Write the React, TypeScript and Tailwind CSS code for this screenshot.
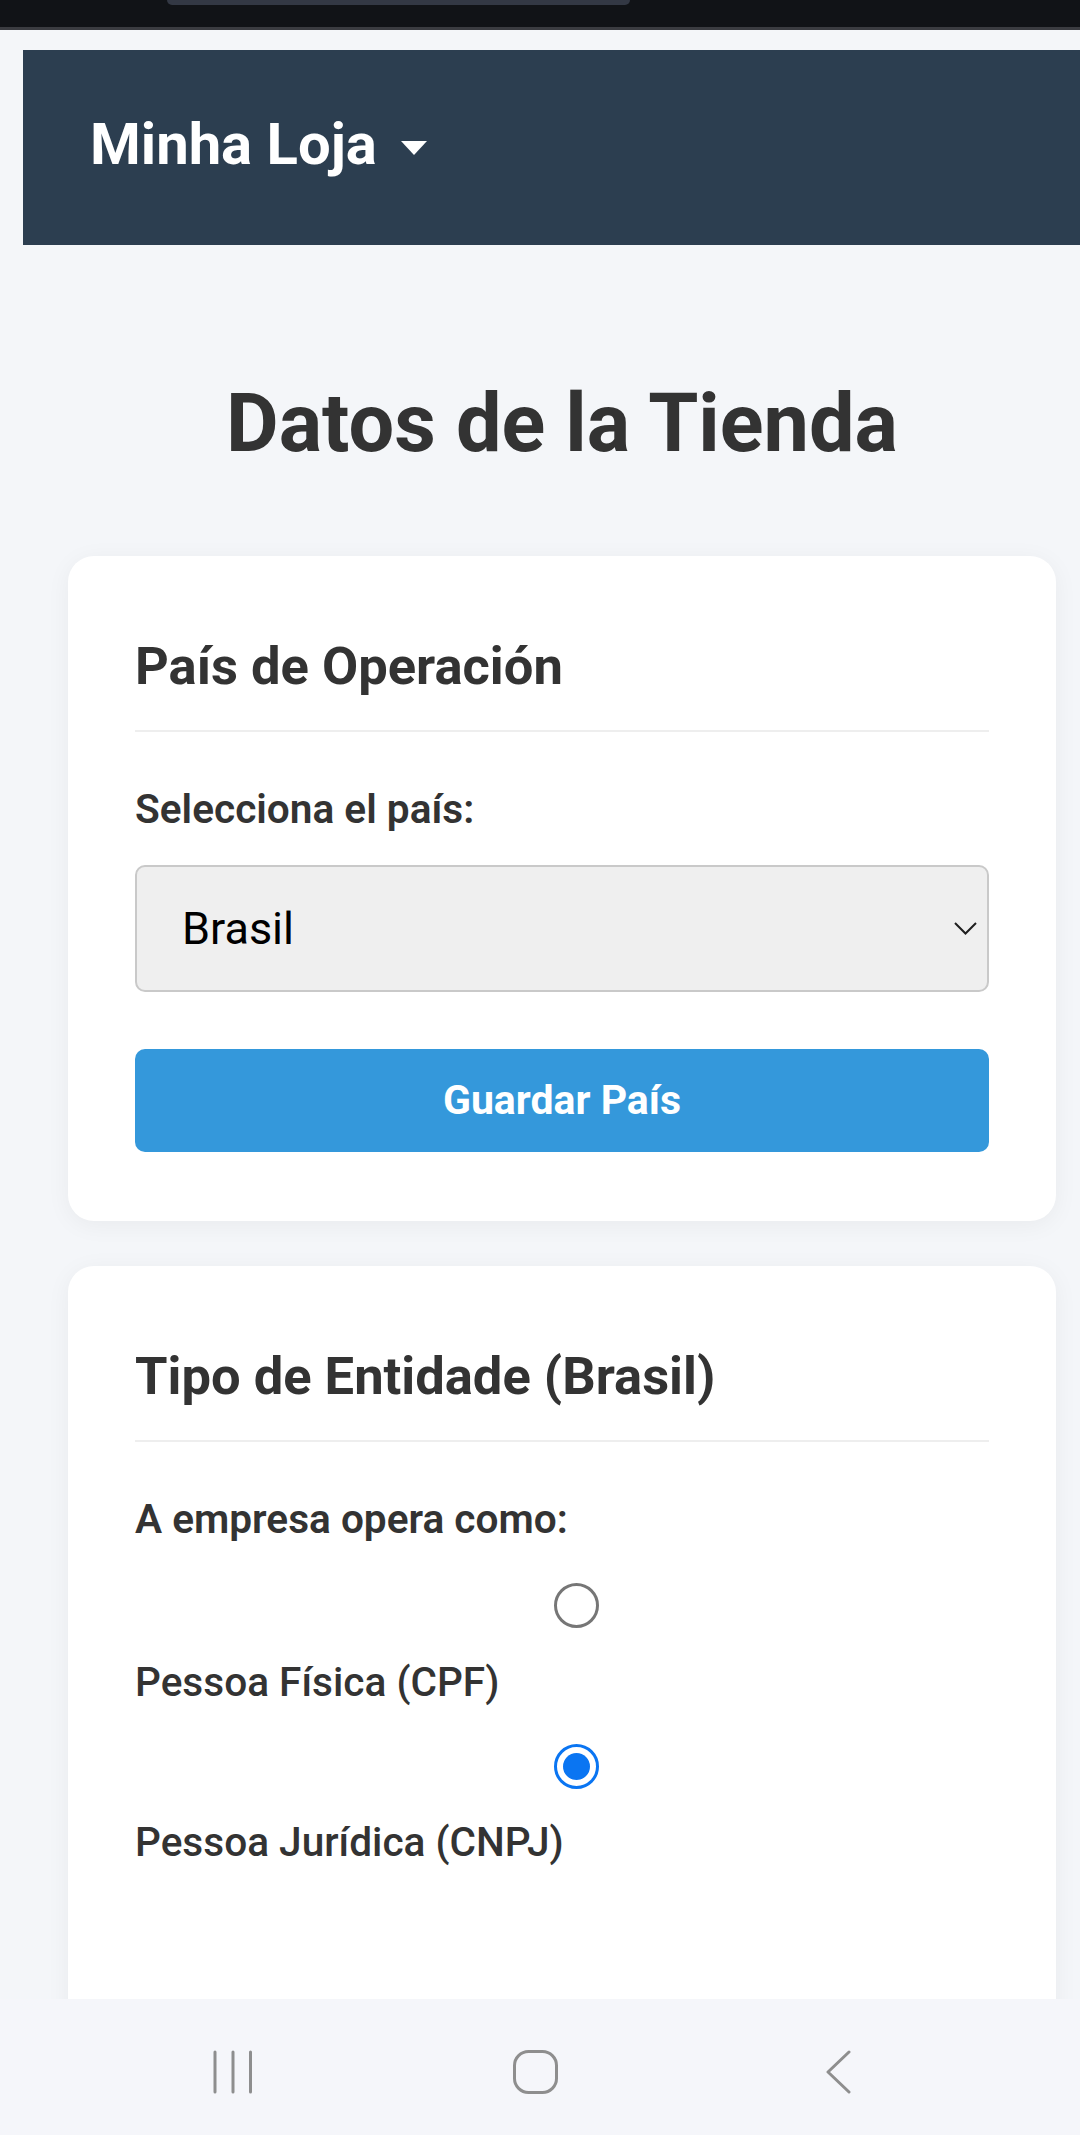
import React from "react"

function Radio({ checked }: { checked?: boolean }) {
  if (checked) {
    return (
      <div className="ml-[419px] flex h-[45px] w-[45px] items-center justify-center rounded-full border-[3px] border-[#0a75f2] bg-white">
        <div className="h-[27px] w-[27px] rounded-full bg-[#0a75f2]" />
      </div>
    )
  }
  return <div className="ml-[419px] h-[45px] w-[45px] rounded-full border-[3px] border-[#767676] bg-white" />
}

function CardTitle({ children }: { children: React.ReactNode }) {
  return (
    <h2 className="border-b-2 border-[#eeeeee] pb-[34px] text-[52.5px] font-bold leading-[60px] text-[#333333]">
      {children}
    </h2>
  )
}

function FieldLabel({ children }: { children: React.ReactNode }) {
  return <p className="mt-[53px] text-[40.6px] font-semibold leading-[48px] text-[#333333]">{children}</p>
}

export default function App() {
  return (
    <div className="flex h-[2135px] w-[1080px] flex-col overflow-hidden font-['Roboto',sans-serif]">
      {/* browser chrome strip */}
      <div className="h-[27px] bg-[#111317] pl-[167px]">
        <div className="h-[5px] w-[463px] rounded-b-[12px] bg-[#333844]" />
      </div>
      <div className="h-[3px] bg-[#3b3c41]" />

      <div className="flex-1 overflow-hidden bg-[#f4f6f9]">
        <div className="w-[1124px] px-[23px] pt-[20px]">
          <header className="flex items-center bg-[#2c3e50] pb-[72px] pl-[67px] pt-[65px]">
            <span className="text-[58px] font-bold leading-[58px] text-white">Minha Loja</span>
            <svg className="ml-[24px] mt-[7px]" width="26" height="14" viewBox="0 0 26 14">
              <polygon points="0,0 26,0 13,14" fill="#ffffff" />
            </svg>
          </header>

          <h1 className="mt-[129px] text-center text-[81px] font-bold leading-[100px] text-[#333333]">
            Datos de la Tienda
          </h1>

          <section className="mx-[45px] mt-[82px] rounded-[26px] bg-white px-[67px] pb-[69px] pt-[80px] shadow-[0_4px_24px_rgba(0,0,0,0.05)]">
            <CardTitle>País de Operación</CardTitle>
            <FieldLabel>Selecciona el país:</FieldLabel>
            <div className="mt-[32px] flex h-[127px] items-center justify-between rounded-[10px] border-2 border-[#c9c9c9] bg-[#efefef] pl-[45px] pr-[10px]">
              <span className="text-[45px] leading-[52px] text-black">Brasil</span>
              <svg width="23" height="13" viewBox="0 0 23 13" fill="none">
                <polyline points="1,1 11.5,11.5 22,1" stroke="#1f1f1f" strokeWidth="2" />
              </svg>
            </div>
            <button className="mt-[57px] flex h-[103px] w-full items-center justify-center rounded-[10px] bg-[#3498db] text-[41px] font-bold text-white">
              Guardar País
            </button>
          </section>

          <section className="mx-[45px] mt-[45px] rounded-[26px] bg-white px-[67px] pb-[300px] pt-[80px] shadow-[0_4px_24px_rgba(0,0,0,0.05)]">
            <CardTitle>Tipo de Entidade (Brasil)</CardTitle>
            <FieldLabel>A empresa opera como:</FieldLabel>
            <div className="mt-[40px]">
              <Radio />
            </div>
            <p className="mt-[30px] text-[40.6px] font-medium leading-[48px] text-[#333333]">Pessoa Física (CPF)</p>
            <div className="mt-[38px]">
              <Radio checked />
            </div>
            <p className="mt-[29px] text-[40.6px] font-medium leading-[48px] text-[#333333]">Pessoa Jurídica (CNPJ)</p>
          </section>
        </div>
      </div>

      {/* system navigation bar */}
      <nav className="flex h-[136px] items-start bg-[#f5f6fa] pl-[213px] pt-[51px]">
        <svg width="40" height="44" viewBox="0 0 40 44" fill="none" stroke="#8e8e8e" strokeWidth="3" strokeLinecap="round">
          <line x1="2" y1="2" x2="2" y2="42" />
          <line x1="20" y1="2" x2="20" y2="42" />
          <line x1="37.5" y1="2" x2="37.5" y2="42" />
        </svg>
        <svg className="ml-[260px]" width="45" height="44" viewBox="0 0 45 44" fill="none" stroke="#8e8e8e" strokeWidth="3">
          <rect x="1.5" y="1.5" width="42" height="41" rx="14" />
        </svg>
        <svg className="ml-[267px]" width="26" height="44" viewBox="0 0 26 44" fill="none" stroke="#8e8e8e" strokeWidth="3" strokeLinecap="round" strokeLinejoin="round">
          <polyline points="24,2 3,22 24,42" />
        </svg>
      </nav>
    </div>
  )
}
